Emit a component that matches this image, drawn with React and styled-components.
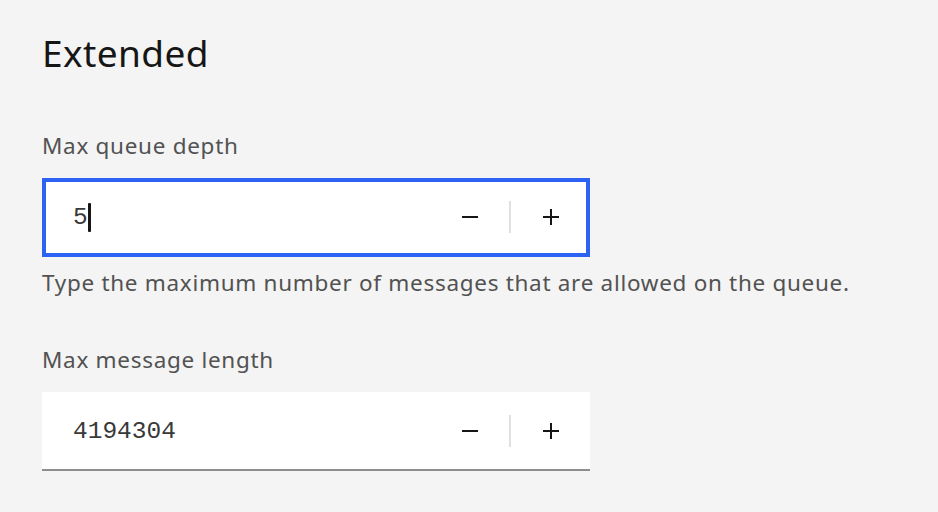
import React from 'react';
import styled, { createGlobalStyle } from 'styled-components';

const GlobalStyle = createGlobalStyle`
  html, body {
    margin: 0;
    padding: 0;
    background: #f4f4f4;
  }
  body {
    font-family: 'Noto Sans', 'Open Sans', sans-serif;
  }
`;

const fields = [
  {
    id: 'depth',
    label: 'Max queue depth',
    value: '5',
    focused: true,
    helper: 'Type the maximum number of messages that are allowed on the queue.',
  },
  {
    id: 'length',
    label: 'Max message length',
    value: '4194304',
    focused: false,
  },
];

const MinusIcon = () => (
  <svg width="16" height="16" viewBox="0 0 16 16" aria-hidden="true">
    <rect x="0" y="7" width="16" height="2" fill="#161616" />
  </svg>
);

const PlusIcon = () => (
  <svg width="16" height="16" viewBox="0 0 16 16" aria-hidden="true">
    <rect x="0" y="7" width="16" height="2" fill="#161616" />
    <rect x="7" y="0" width="2" height="16" fill="#161616" />
  </svg>
);

const NumberField = ({ label, value, focused, helper }) => (
  <Field>
    <Label>{label}</Label>
    <InputWrap $focused={focused}>
      <Value>
        {value}
        {focused && <Caret />}
      </Value>
      <Stepper>
        <StepButton type="button" aria-label="Decrement">
          <MinusIcon />
        </StepButton>
        <Divider />
        <StepButton type="button" aria-label="Increment">
          <PlusIcon />
        </StepButton>
      </Stepper>
    </InputWrap>
    {helper && <Helper>{helper}</Helper>}
  </Field>
);

const App = () => (
  <>
    <GlobalStyle />
    <Page>
      <Heading>Extended</Heading>
      <Form>
        {fields.map((f) => (
          <NumberField key={f.id} {...f} />
        ))}
      </Form>
    </Page>
  </>
);

const Page = styled.div`
  padding: 29px 42px 0 42px;
  width: 548px;
`;

const Heading = styled.h2`
  margin: 0;
  font-size: 37px;
  line-height: 48px;
  font-weight: 400;
  letter-spacing: 0.4px;
  color: #161616;
`;

const Form = styled.div`
  display: flex;
  flex-direction: column;
  gap: 49px;
  margin-top: 55px;
`;

const Field = styled.div`
  display: flex;
  flex-direction: column;
`;

const Label = styled.label`
  font-size: 22.5px;
  line-height: 28px;
  letter-spacing: 0.7px;
  color: #525252;
  margin-bottom: 18px;
  white-space: nowrap;
`;

const InputWrap = styled.div`
  display: flex;
  align-items: center;
  height: 79px;
  box-sizing: border-box;
  background: #ffffff;
  border-bottom: 2px solid ${({ $focused }) => ($focused ? 'transparent' : '#8d8d8d')};
  outline: ${({ $focused }) => ($focused ? '4px solid #2d63f5' : 'none')};
  outline-offset: -4px;
`;

const Value = styled.div`
  flex: 1;
  display: flex;
  align-items: center;
  padding-left: 31px;
  padding-top: 2px;
  font-family: 'Liberation Mono', 'DejaVu Sans Mono', monospace;
  font-size: 24.5px;
  color: #393939;
`;

const Caret = styled.span`
  display: inline-block;
  width: 3px;
  height: 29px;
  background: #161616;
  border-radius: 1px;
`;

const Stepper = styled.div`
  display: flex;
  align-items: center;
  height: 100%;
`;

const StepButton = styled.button`
  width: 79px;
  height: 100%;
  display: flex;
  align-items: center;
  justify-content: center;
  border: none;
  background: transparent;
  padding: 0;
  cursor: pointer;
`;

const Divider = styled.span`
  width: 2px;
  height: 32px;
  background: #e0e0e0;
`;

const Helper = styled.div`
  margin-top: 12px;
  font-size: 22.5px;
  line-height: 28px;
  letter-spacing: 0.7px;
  color: #525252;
  white-space: nowrap;
`;

export default App;
